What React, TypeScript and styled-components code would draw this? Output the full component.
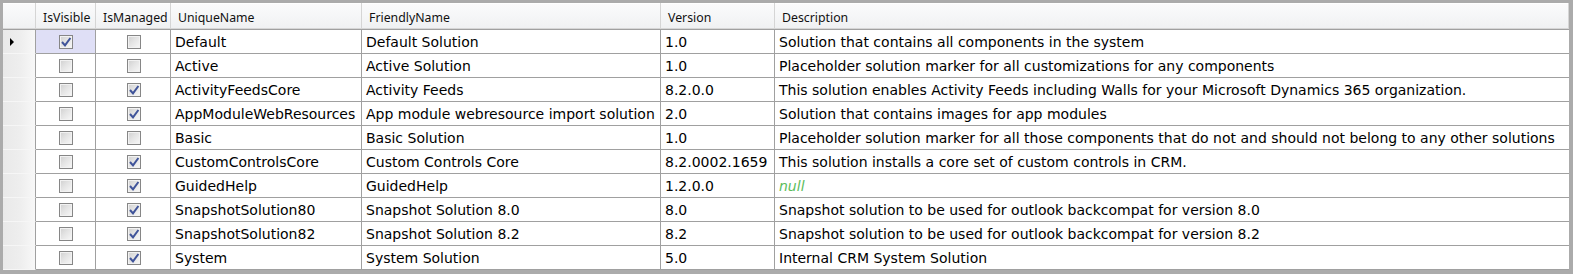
import React from "react";
import styled, { createGlobalStyle } from "styled-components";

const GlobalStyle = createGlobalStyle`
  html, body { margin: 0; padding: 0; background: #ffffff; }
  * { box-sizing: border-box; }
`;

const COLS = "33px 60px 75px 191px 299px 114px 1fr";
const GRID_LINE = "#a0a0a0";

const Frame = styled.div`
  width: 1573px;
  height: 274px;
  background: #ababab;
  border-style: solid;
  border-color: #ababab;
  border-width: 3px 4px 3px 3px;
  display: flex;
  flex-direction: column;
  overflow: hidden;
`;

const HeaderRow = styled.div`
  display: grid;
  grid-template-columns: ${COLS};
  height: 27px;
  border-bottom: 1px solid ${GRID_LINE};
`;

const HeaderCell = styled.div`
  display: flex;
  align-items: center;
  padding: 2px 0 0 7px;
  background: linear-gradient(#fbfbfc 0%, #f6f7f8 45%, #eff0f2 100%);
  border-right: 1px solid #d5d5d5;
  box-shadow: inset 0 -1px 0 #d6d6d6, inset 0 1px 0 #ffffff;
  font-family: "Noto Sans", "Open Sans", sans-serif;
  font-size: 12.3px;
  color: #111111;
  white-space: nowrap;
  overflow: hidden;
`;

const Row = styled.div`
  display: grid;
  grid-template-columns: ${COLS};
  height: 24px;
  background: #ffffff;
`;

const RowHeader = styled.div`
  display: flex;
  align-items: center;
  padding-left: 7px;
  background: linear-gradient(to right, #e9e9e9 0%, #eeeeee 55%, #f8f8f8 100%);
  border-right: 1px solid ${GRID_LINE};
  border-bottom: 1px solid #f6f6f6;
`;

const Cell = styled.div<{ $selected?: boolean; $center?: boolean; $last?: boolean }>`
  display: flex;
  align-items: center;
  justify-content: ${(p) => (p.$center ? "center" : "flex-start")};
  padding-left: ${(p) => (p.$center ? "0" : "4px")};
  background: ${(p) => (p.$selected ? "#dfdff6" : "#ffffff")};
  border-right: ${(p) => (p.$last ? "none" : `1px solid ${GRID_LINE}`)};
  border-bottom: 1px solid ${GRID_LINE};
  font-family: "DejaVu Sans", Verdana, sans-serif;
  font-size: 14px;
  color: #000000;
  white-space: nowrap;
  overflow: hidden;
`;

const NullText = styled.span`
  font-style: italic;
  color: #5cbd5c;
`;

const Box = styled.span`
  display: inline-flex;
  width: 14px;
  height: 14px;
  margin-left: 1px;
  margin-top: 1px;
  border: 1px solid #868686;
  background: linear-gradient(135deg, #cfcfcf 0%, #e4e4e4 45%, #f8f8f8 100%);
  box-shadow: inset 0 0 0 1px #f2f2f2;
  position: relative;
`;

const Check = styled.svg`
  position: absolute;
  left: 0;
  top: 0;
`;

const Arrow = styled.svg`
  display: block;
`;

function CheckBox({ checked }: { checked: boolean }) {
  return (
    <Box>
      {checked && (
        <Check width="12" height="12" viewBox="0 0 12 12">
          <path d="M2 6 L5 9.4 L10.4 2" fill="none" stroke="#40549a" strokeWidth="2" strokeLinejoin="miter" />
        </Check>
      )}
    </Box>
  );
}

type Sol = {
  visible: boolean;
  managed: boolean;
  unique: string;
  friendly: string;
  version: string;
  description: string | null;
};

const data: Sol[] = [
  { visible: true, managed: false, unique: "Default", friendly: "Default Solution", version: "1.0", description: "Solution that contains all components in the system" },
  { visible: false, managed: false, unique: "Active", friendly: "Active Solution", version: "1.0", description: "Placeholder solution marker for all customizations for any components" },
  { visible: false, managed: true, unique: "ActivityFeedsCore", friendly: "Activity Feeds", version: "8.2.0.0", description: "This solution enables Activity Feeds including Walls for your Microsoft Dynamics 365 organization." },
  { visible: false, managed: true, unique: "AppModuleWebResources", friendly: "App module webresource import solution", version: "2.0", description: "Solution that contains images for app modules" },
  { visible: false, managed: false, unique: "Basic", friendly: "Basic Solution", version: "1.0", description: "Placeholder solution marker for all those components that do not and should not belong to any other solutions" },
  { visible: false, managed: true, unique: "CustomControlsCore", friendly: "Custom Controls Core", version: "8.2.0002.1659", description: "This solution installs a core set of custom controls in CRM." },
  { visible: false, managed: true, unique: "GuidedHelp", friendly: "GuidedHelp", version: "1.2.0.0", description: null },
  { visible: false, managed: true, unique: "SnapshotSolution80", friendly: "Snapshot Solution 8.0", version: "8.0", description: "Snapshot solution to be used for outlook backcompat for version 8.0" },
  { visible: false, managed: true, unique: "SnapshotSolution82", friendly: "Snapshot Solution 8.2", version: "8.2", description: "Snapshot solution to be used for outlook backcompat for version 8.2" },
  { visible: false, managed: true, unique: "System", friendly: "System Solution", version: "5.0", description: "Internal CRM System Solution" },
];

const headers = ["", "IsVisible", "IsManaged", "UniqueName", "FriendlyName", "Version", "Description"];

export default function App() {
  return (
    <>
      <GlobalStyle />
      <Frame>
        <HeaderRow>
          {headers.map((h, i) => (
            <HeaderCell key={i}>{h}</HeaderCell>
          ))}
        </HeaderRow>
        {data.map((r, i) => (
          <Row key={r.unique}>
            <RowHeader>
              {i === 0 && (
                <Arrow width="4" height="8" viewBox="0 0 4 8">
                  <polygon points="0,0 4,4 0,8" fill="#000" />
                </Arrow>
              )}
            </RowHeader>
            <Cell $center $selected={i === 0}>
              <CheckBox checked={r.visible} />
            </Cell>
            <Cell $center>
              <CheckBox checked={r.managed} />
            </Cell>
            <Cell>{r.unique}</Cell>
            <Cell>{r.friendly}</Cell>
            <Cell>{r.version}</Cell>
            <Cell $last>{r.description === null ? <NullText>null</NullText> : r.description}</Cell>
          </Row>
        ))}
      </Frame>
    </>
  );
}
